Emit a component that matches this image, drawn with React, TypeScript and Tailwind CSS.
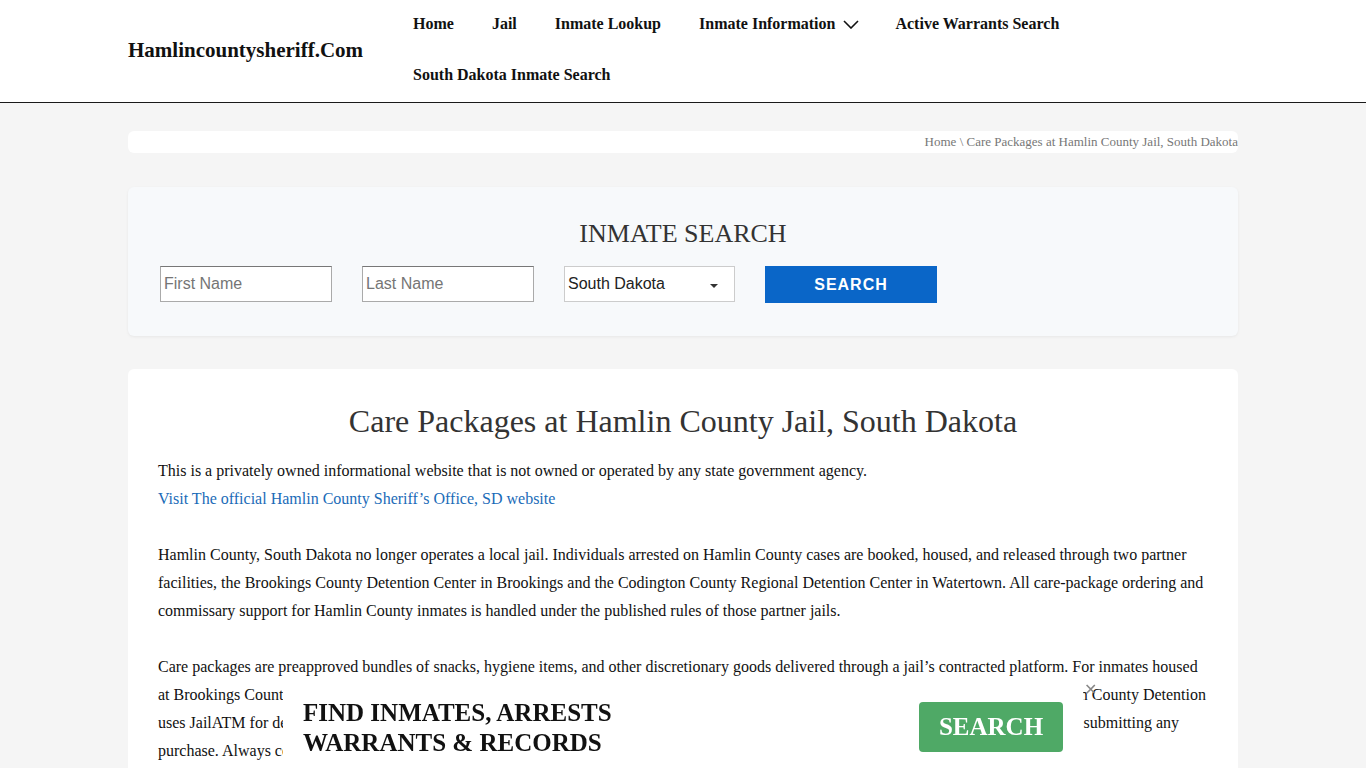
const navItems = [
  { label: "Home" },
  { label: "Jail" },
  { label: "Inmate Lookup" },
  { label: "Inmate Information", dropdown: true },
  { label: "Active Warrants Search" },
  { label: "South Dakota Inmate Search" },
];

const serif = "font-['Liberation_Serif','Times_New_Roman',serif]";

function Header() {
  return (
    <header className="h-[103px] border-b border-[#1a1a1a] bg-white">
      <div className="mx-auto flex h-[102px] w-[1110px] items-center">
        <a className="w-[285px] text-[21px] font-bold text-[#111]">Hamlincountysheriff.Com</a>
        <nav className="flex w-[700px] flex-wrap gap-x-[38px] self-start">
          {navItems.map(({ label, dropdown }) => (
            <a
              key={label}
              className="flex h-[51px] items-center gap-[8px] pb-[3px] text-[16px] font-bold text-[#111]"
            >
              {label}
              {dropdown && (
                <svg width="16" height="9" viewBox="0 0 16 9" className="mr-[-2px]">
                  <path d="M1 1l7 7 7-7" fill="none" stroke="#111" strokeWidth="1.6" />
                </svg>
              )}
            </a>
          ))}
        </nav>
      </div>
    </header>
  );
}

function SearchBox() {
  return (
    <section className="mt-[34px] rounded-md bg-[#f7f9fb] px-[32px] pb-[33px] pt-[31px] shadow-[0_1px_3px_rgba(0,0,0,0.06)]">
      <h2 className="text-center text-[26px] leading-[31px] text-[#333]">INMATE SEARCH</h2>
      <div className="mt-[17px] flex gap-[30px] font-['Liberation_Sans',Arial,sans-serif]">
        <input
          placeholder="First Name"
          className="h-[36px] w-[172px] border border-[#aaa] border-t-[#777] bg-white px-[3px] text-[16px] placeholder:text-[#757575]"
        />
        <input
          placeholder="Last Name"
          className="h-[36px] w-[172px] border border-[#aaa] border-t-[#777] bg-white px-[3px] text-[16px] placeholder:text-[#757575]"
        />
        <div className="flex h-[36px] w-[171px] items-center justify-between border border-[#ccc] bg-white pl-[3px] pr-[16px] text-[16px] text-[#222]">
          South Dakota
          <svg width="8" height="4" viewBox="0 0 8 4" className="mt-[3px]">
            <path d="M0 0h8L4 4z" fill="#333" />
          </svg>
        </div>
        <button className="h-[37px] w-[172px] bg-[#0a66c8] text-[16px] font-bold tracking-[1px] text-white">
          SEARCH
        </button>
      </div>
    </section>
  );
}

function Content() {
  return (
    <article className="mt-[33px] rounded-md bg-white px-[30px] pb-[40px] pt-[32px] text-[16px] leading-[28px] text-[#111]">
      <h1 className="text-center text-[32px] leading-[40px] text-[#333]">
        Care Packages at Hamlin County Jail, South Dakota
      </h1>
      <p className="mb-[28px] mt-[16px]">
        This is a privately owned informational website that is not owned or operated by any state government agency.
        <br />
        <a className="text-[#1a6bb8]">Visit The official Hamlin County Sheriff’s Office, SD website</a>
      </p>
      <p className="mb-[28px]">
        Hamlin County, South Dakota no longer operates a local jail. Individuals arrested on Hamlin County cases are booked, housed, and released through two partner facilities, the Brookings County Detention Center in Brookings and the Codington County Regional Detention Center in Watertown. All care-package ordering and commissary support for Hamlin County inmates is handled under the published rules of those partner jails.
      </p>
      <p className="mb-[28px]">
        Care packages are preapproved bundles of snacks, hygiene items, and other discretionary goods delivered through a jail’s contracted platform. For inmates housed at Brookings County Detention Center, families and friends place their orders through the approved Access Securepak program, while Codington County Detention uses JailATM for deposits, commissary and care packages. Check each jail’s approved list, weekly spending limits and delivery schedule before submitting any purchase. Always confirm where the person is currently held, since transfers between the two partner facilities are common.
      </p>
      <p className="mb-[28px]">
        Each facility sets its own spending caps and ordering windows. Orders that exceed the limit or include items not on the approved list may be rejected, and refunds are handled by the vendor rather than by the jail.
      </p>
    </article>
  );
}

function Banner() {
  return (
    <div className="fixed bottom-0 left-1/2 flex h-[83px] w-[800px] -translate-x-1/2 items-center justify-between bg-white pl-[20px] pr-[20px]">
      <p className="mt-[3px] text-[25px] font-bold leading-[30px] text-[#111]">
        FIND INMATES, ARRESTS
        <br />
        WARRANTS &amp; RECORDS
      </p>
      <button className="h-[50px] w-[144px] rounded-[4px] bg-[#4fa966] text-[25px] font-bold text-white">
        SEARCH
      </button>
      <span className="absolute left-[801px] top-[-3px] text-[16px] leading-none text-[#888]">✕</span>
    </div>
  );
}

export default function App() {
  return (
    <div className={`min-h-screen bg-[#f5f5f5] ${serif}`}>
      <Header />
      <main className="mx-auto w-[1110px] pb-[100px]">
        <div className="mt-[28px] flex h-[22px] items-center justify-end rounded-md bg-white text-[13px] text-[#777]">
          Home \ Care Packages at Hamlin County Jail, South Dakota
        </div>
        <SearchBox />
        <Content />
      </main>
      <Banner />
    </div>
  );
}
